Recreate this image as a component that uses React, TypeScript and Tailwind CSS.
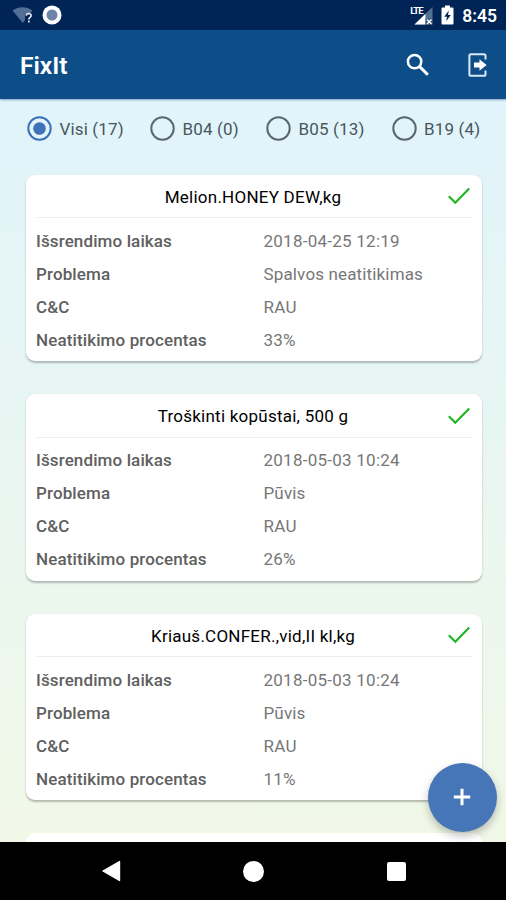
import React, { useState } from 'react';

interface Item {
  title: string;
  time: string;
  problem: string;
  cc: string;
  percent: string;
}

const filters = [
  { id: 'all', label: 'Visi (17)', width: 'w-[123px]' },
  { id: 'b04', label: 'B04 (0)', width: 'w-[116px]' },
  { id: 'b05', label: 'B05 (13)', width: 'w-[125.5px]' },
  { id: 'b19', label: 'B19 (4)', width: 'w-[100px]' },
];

const items: Item[] = [
  { title: 'Melion.HONEY DEW,kg', time: '2018-04-25 12:19', problem: 'Spalvos neatitikimas', cc: 'RAU', percent: '33%' },
  { title: 'Troškinti kopūstai, 500 g', time: '2018-05-03 10:24', problem: 'Pūvis', cc: 'RAU', percent: '26%' },
  { title: 'Kriauš.CONFER.,vid,II kl,kg', time: '2018-05-03 10:24', problem: 'Pūvis', cc: 'RAU', percent: '11%' },
];

function StatusBar() {
  return (
    <div className="flex h-[30px] shrink-0 items-center bg-[#012457] pl-3 pr-[9px] text-white">
      <svg width="22" height="20" viewBox="0 0 22 20">
        <path d="M0.5 5.5C6 1 15 1 20.5 5.5L17 9.5H13V15L10.8 18Z" fill="#526f96" />
        <path d="M14.3 10.6c.2-2.8 5-2.8 4.9 0 0 1.8-2.4 1.8-2.4 4M16.8 15.6v2" fill="none" stroke="#e6ebf2" strokeWidth="1.6" />
      </svg>
      <svg className="ml-2" width="20" height="20" viewBox="0 0 20 20">
        <circle cx="10" cy="10" r="9.5" fill="#fff" />
        <circle cx="10" cy="10" r="5.5" fill="#6c84a8" />
      </svg>
      <div className="flex-1" />
      <div className="relative h-[22px] w-[24px]">
        <svg className="absolute inset-0" width="24" height="22" viewBox="0 0 24 22">
          <path d="M4.5 20.5L22.5 3V20.5Z" fill="#51718f" />
          <path d="M4.5 20.5L15.5 9.8V20.5Z" fill="#fff" />
          <path d="M15.5 14.5h7v6h-7z" fill="#3b587c" />
          <path d="M17 15.5l4.5 4.5M21.5 15.5L17 20" stroke="#fff" strokeWidth="1.4" />
        </svg>
        <span className="absolute left-0 top-0.5 text-[9.5px] font-bold leading-[9px] tracking-[-1px]">LTE</span>
      </div>
      <svg className="ml-[7px]" width="13" height="20" viewBox="0 0 13 20">
        <path d="M4 0.5h5v2h2.5q1 0 1 1v15q0 1-1 1h-10q-1 0-1-1v-15q0-1 1-1H4z" fill="#fff" />
        <path d="M7.8 5.5L3.2 11.8H6L5.2 16.2L9.8 9.9H7z" fill="#012457" />
      </svg>
      <span className="ml-2 mt-0.5 whitespace-nowrap text-[17.5px] font-semibold leading-5">8:45</span>
    </div>
  );
}

function AppBar() {
  return (
    <header className="z-10 flex h-[68.5px] shrink-0 items-center bg-[#0d4e89] pl-5 pr-[18px] text-white shadow-[0_1px_2px_rgba(20,50,140,0.45)]">
      <h1 className="mt-1 flex-1 text-[24.5px] font-semibold leading-7">FixIt</h1>
      <button aria-label="search" className="mr-[38px] mt-0.5">
        <svg width="24" height="24" viewBox="0 0 24 24" fill="none" stroke="#fff">
          <circle cx="8.6" cy="8.6" r="6.7" strokeWidth="2.5" />
          <path d="M13.4 13.4L21.8 21.8" strokeWidth="3" />
        </svg>
      </button>
      <button aria-label="logout" className="mt-0.5">
        <svg width="20" height="24" viewBox="0 0 20 24">
          <path d="M17.5 6.5V2.8Q17.5 1.2 15.9 1.2H3Q1.4 1.2 1.4 2.8V21.2Q1.4 22.8 3 22.8H15.9Q17.5 22.8 17.5 21.2V17.5" fill="none" stroke="#dce8f5" strokeWidth="2" />
          <path d="M6 9.4h5.5V6.2L18.6 12l-7.1 5.8v-3.2H6z" fill="#fff" />
        </svg>
      </button>
    </header>
  );
}

function ItemCard({ item }: { item: Item }) {
  const rows = [
    ['Išsrendimo laikas', item.time],
    ['Problema', item.problem],
    ['C&C', item.cc],
    ['Neatitikimo procentas', item.percent],
  ];

  return (
    <div className="h-[186.5px] shrink-0 rounded-[9px] bg-white px-2.5 shadow-[0_1.5px_2px_rgba(0,0,0,0.25)]">
      <div className="flex h-[43.5px] items-center border-b border-[#eeeeee]">
        <div className="w-[22px]" />
        <h2 className="mt-0.5 flex-1 whitespace-nowrap text-center text-[17px] leading-6 tracking-[0.24px] text-black">
          {item.title}
        </h2>
        <svg className="mr-[1.5px] mt-px" width="22" height="18" viewBox="0 0 22 18" fill="none" stroke="#20b526" strokeWidth="2.2">
          <path d="M0.8 9.3L7.3 15.8L21.2 1.6" />
        </svg>
      </div>
      <dl className="pt-[6.5px] text-[17px] leading-[33px]">
        {rows.map(([label, value]) => (
          <div key={label} className="flex h-[33px] whitespace-nowrap">
            <dt className="w-[227.5px] font-medium tracking-[0.12px] text-[#606060]">{label}</dt>
            <dd className={value === item.problem ? 'tracking-[0.15px] text-[#777777]' : 'tracking-[0.25px] text-[#777777]'}>{value}</dd>
          </div>
        ))}
      </dl>
    </div>
  );
}

export default function App() {
  const [selected, setSelected] = useState('all');

  return (
    <div className="relative flex h-[900px] w-[506px] flex-col overflow-hidden font-['Roboto',sans-serif]">
      <StatusBar />
      <AppBar />
      <main className="flex min-h-0 flex-1 flex-col overflow-hidden bg-linear-to-b from-[#e1f4fb] to-[#f1f8e7]">
        <div className="flex h-[60px] shrink-0 items-center pl-[27px]">
          {filters.map((f) => (
            <button key={f.id} onClick={() => setSelected(f.id)} className={`flex shrink-0 items-center gap-[7.5px] ${f.width}`}>
              <svg width="25" height="25" viewBox="0 0 25 25">
                <circle cx="12.5" cy="12.5" r="11.2" fill="none" stroke={selected === f.id ? '#3a6fb8' : '#5a686e'} strokeWidth="2" />
                {selected === f.id && <circle cx="12.5" cy="12.5" r="6.3" fill="#4171b8" />}
              </svg>
              <span className="mt-px whitespace-nowrap text-[17px] leading-6 tracking-[0.15px] text-[#48565c]">{f.label}</span>
            </button>
          ))}
        </div>
        <div className="flex flex-col gap-[33px] pl-[26px] pr-[24.5px] pt-4">
          {items.map((item) => (
            <ItemCard key={item.title} item={item} />
          ))}
          <div className="h-10 shrink-0 rounded-[9px] bg-white" />
        </div>
      </main>
      <nav className="flex h-[58px] shrink-0 items-center justify-between bg-black pl-[102px] pr-[100px]">
        <svg width="19" height="22" viewBox="0 0 19 22">
          <path d="M1 11L17.5 1.5V20.5Z" fill="#fff" stroke="#fff" strokeWidth="1.4" strokeLinejoin="round" />
        </svg>
        <div className="mr-px h-[21px] w-[21px] rounded-full bg-white" />
        <div className="h-[19px] w-[19px] rounded-[2px] bg-white" />
      </nav>
      <button aria-label="add" className="absolute bottom-[68.5px] right-[9px] flex h-[69px] w-[69px] items-center justify-center rounded-full bg-[#4676b8] shadow-[0_4px_8px_rgba(0,0,0,0.25)]">
        <svg className="mr-0.5" width="18" height="18" viewBox="0 0 18 18" stroke="#fff" strokeWidth="3">
          <path d="M9 0.8V17.2M0.8 9H17.2" />
        </svg>
      </button>
    </div>
  );
}
